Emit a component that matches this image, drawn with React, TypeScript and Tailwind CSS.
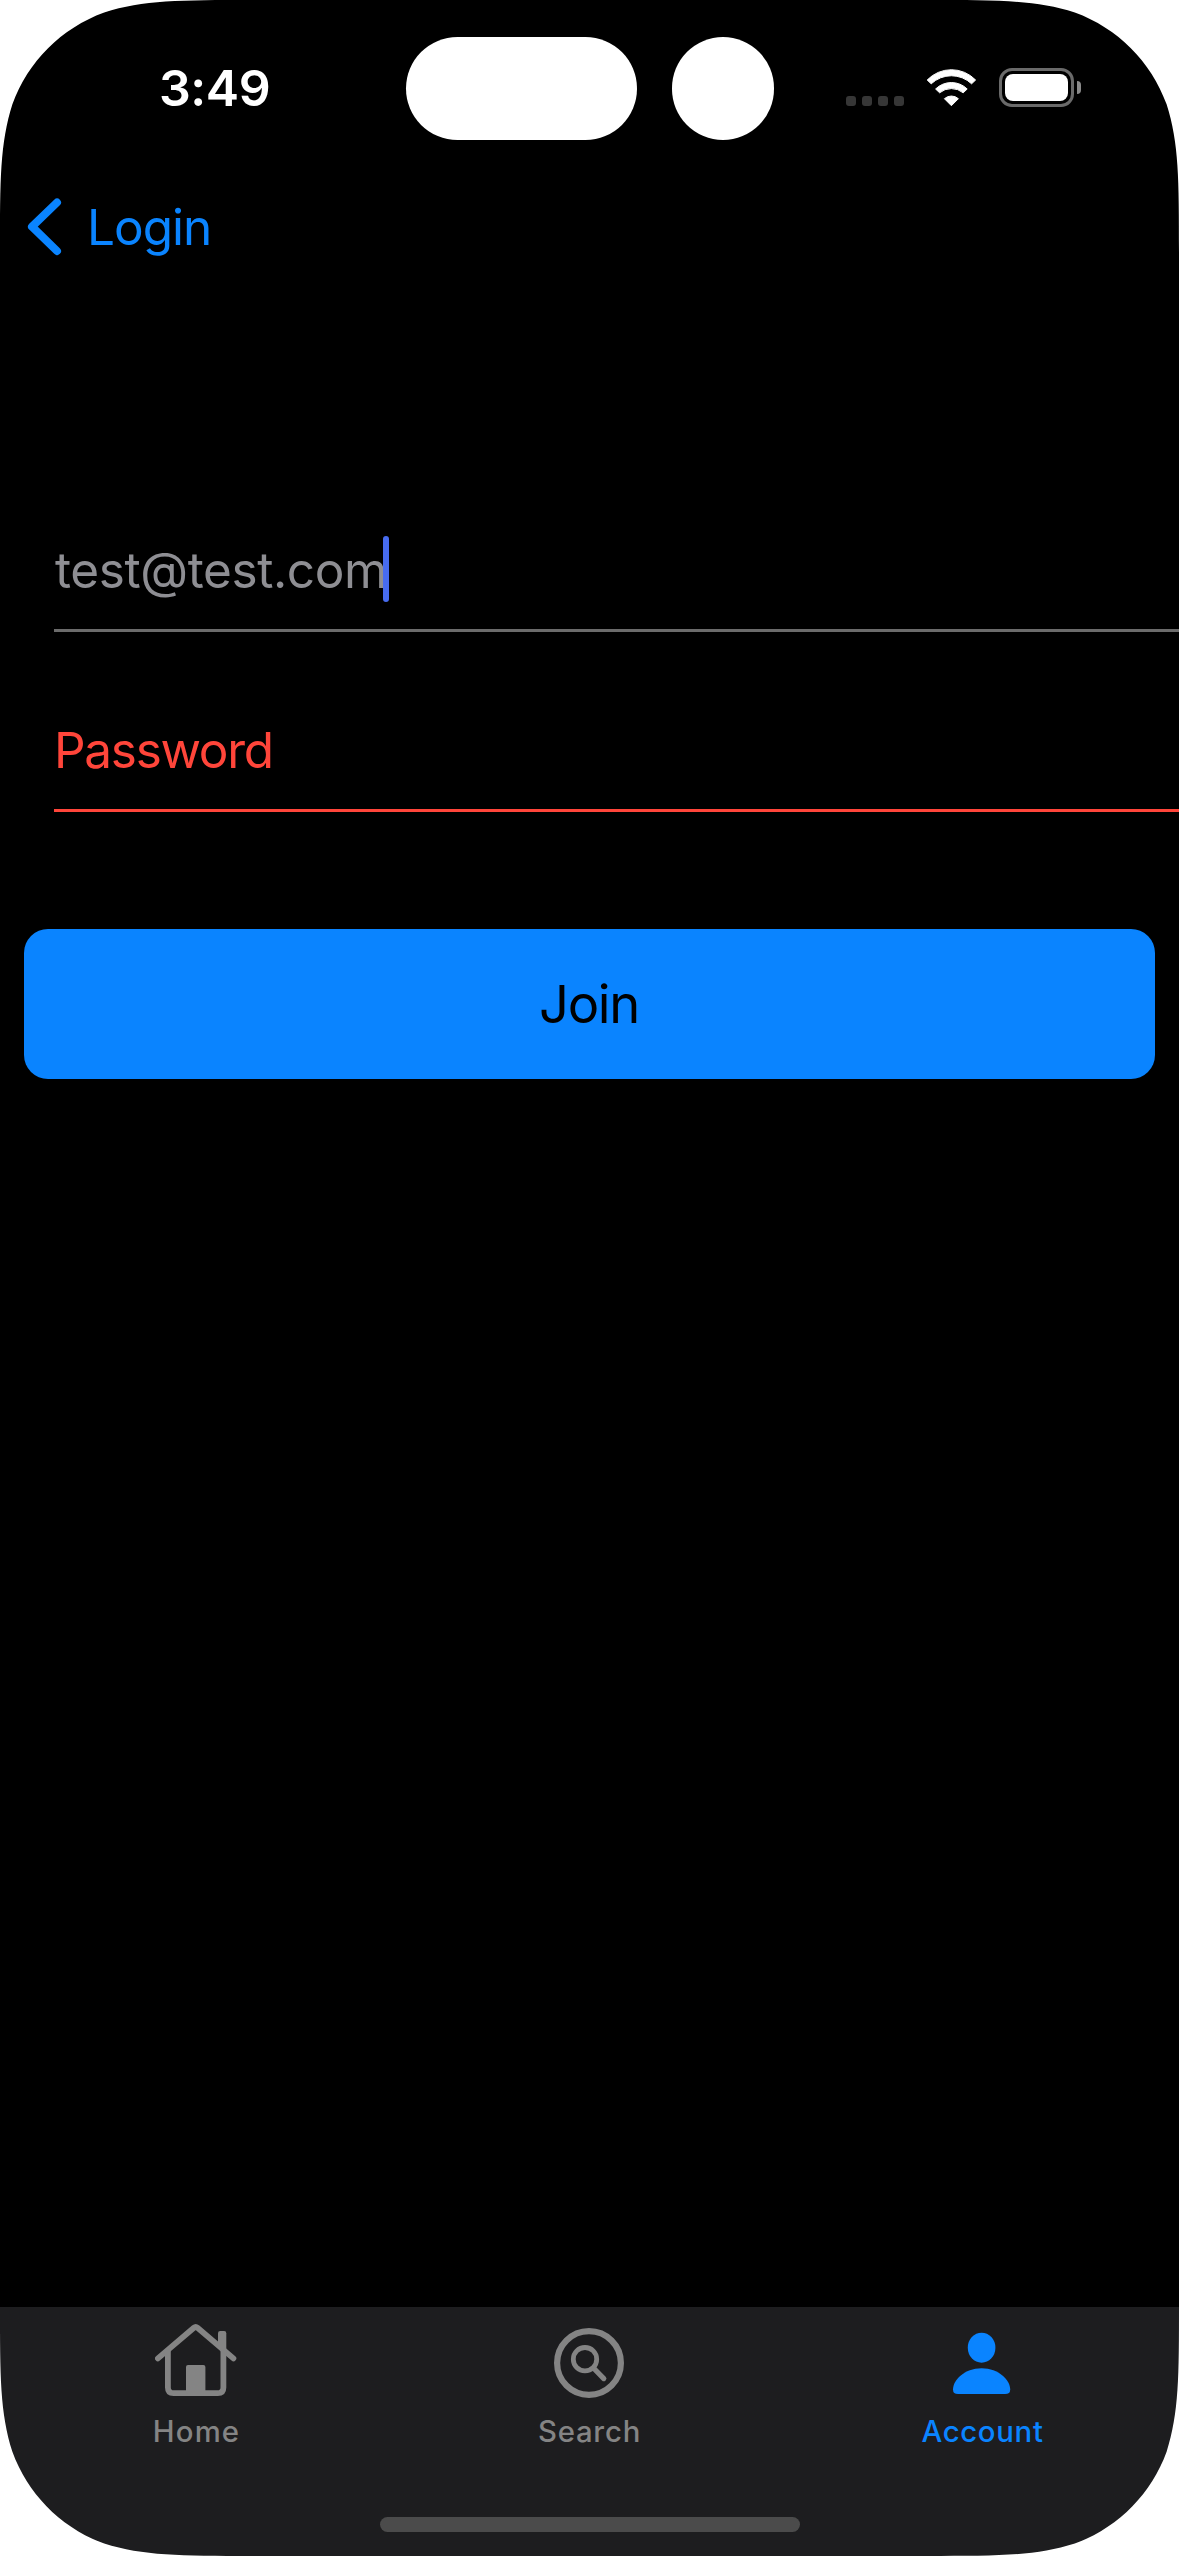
import type { ReactNode } from 'react';

function Corner({ className }: { className: string }) {
  return (
    <svg className={`pointer-events-none absolute h-[253px] w-[253px] ${className}`} viewBox="0 0 253 253" aria-hidden="true">
      <path
        d="M0 0H252.2C179.6 0 143.3 0 104.2 12.4C61.5 27.9 27.9 61.5 12.4 104.2C0 143.3 0 179.6 0 252.2Z"
        fill="#fff"
      />
    </svg>
  );
}

function WifiIcon() {
  return (
    <svg className="h-[38px] w-[51px]" viewBox="0 0 51 38" fill="#fff" stroke="#fff" strokeWidth="1" strokeLinejoin="round">
      <path d="M1.2 11A33.6 33.6 0 0 1 49.6 11L45.6 14.8A29.4 29.4 0 0 0 5.2 14.8Z" />
      <path d="M9.6 20A22.5 22.5 0 0 1 41.2 20L37.2 23.8A18.6 18.6 0 0 0 13.6 23.8Z" />
      <path d="M18.4 29.7A10.5 10.5 0 0 1 32.4 29.7L25.4 36.7Z" />
    </svg>
  );
}

function HomeIcon() {
  return (
    <svg className="h-[76px] w-[83px]" viewBox="0 0 83 76" fill="none" stroke="currentColor" strokeWidth="5.8" strokeLinecap="round" strokeLinejoin="round">
      <path d="M2.9 35.4L38.9 4.7Q40.7 3.2 42.5 4.7L78.4 35.4" />
      <path d="M12.9 27.5V64.4Q12.9 70.1 18.5 70.1H62.8Q68.4 70.1 68.4 64.4V27.5" strokeLinecap="butt" />
      <path d="M63 25V10.2Q63 8 65.2 8H69.2Q71.3 8 71.3 10.2V32Z" fill="currentColor" stroke="none" />
      <rect x="31" y="42" width="19.4" height="29" rx="2" fill="currentColor" stroke="none" />
    </svg>
  );
}

function SearchIcon() {
  return (
    <svg className="h-[76px] w-[83px]" viewBox="0 0 83 76" fill="none" stroke="currentColor" strokeLinecap="round">
      <circle cx="41" cy="40" r="31.9" strokeWidth="6.2" />
      <circle cx="37" cy="36.2" r="11.7" strokeWidth="4.8" />
      <path d="M45.7 45.2L55.8 55.6" strokeWidth="5.2" />
    </svg>
  );
}

function AccountIcon() {
  return (
    <svg className="h-[76px] w-[83px]" viewBox="0 0 83 76" fill="currentColor">
      <ellipse cx="40.6" cy="24.7" rx="13.8" ry="15" />
      <path d="M40.6 45.3C57.9 45.3 69.2 57.5 69.2 66.4Q69.2 71 64.2 71H17Q12 71 12 66.4C12 57.5 23.3 45.3 40.6 45.3Z" />
    </svg>
  );
}

function StatusBar() {
  return (
    <header className="flex h-[160px] items-start justify-between pt-[37px]">
      <div className="flex h-[102px] w-[405px] items-center pl-[159px]">
        <span className="text-[50px] leading-none font-semibold tracking-[-0.45px] text-white">3:49</span>
      </div>
      <div className="flex gap-[35px]">
        <div className="h-[103px] w-[231px] rounded-full bg-white" />
        <div className="h-[103px] w-[102px] rounded-full bg-white" />
      </div>
      <div className="flex h-[102px] w-[405px] items-center pl-[72px]">
        <div className="flex gap-1.5 pt-[26px]">
          {[0, 1, 2, 3].map((dot) => (
            <div key={dot} className="h-2.5 w-2.5 rounded-[3px] bg-[#363636]" />
          ))}
        </div>
        <div className="ml-[22px]">
          <WifiIcon />
        </div>
        <div className="-mt-px ml-[22px] flex items-center">
          <div className="h-[39px] w-[75px] rounded-[13px] border-[3px] border-[#6a6a6a] p-[3px]">
            <div className="h-full w-full rounded-[8px] bg-white" />
          </div>
          <div className="ml-[3px] h-[13px] w-1 rounded-r-full bg-[#8a8a8a]" />
        </div>
      </div>
    </header>
  );
}

function Tab({ icon, label, className }: { icon: ReactNode; label: string; className: string }) {
  return (
    <button className={`flex flex-1 flex-col items-center pt-4 text-[29.3px] font-[450] ${className}`}>
      {icon}
      <span className="flex h-[66px] items-center">{label}</span>
    </button>
  );
}

export default function App() {
  return (
    <div className="relative flex h-[2556px] w-[1179px] flex-col overflow-hidden bg-black font-['Inter',sans-serif]">
      <StatusBar />

      <nav className="flex h-[134px] items-center pl-[27px] text-[#0a84ff]">
        <svg className="h-[58px] w-[35px]" viewBox="0 0 35 58" fill="none" stroke="currentColor" strokeWidth="8" strokeLinecap="round" strokeLinejoin="round">
          <path d="M30 4.5L5 28.7L30 53" />
        </svg>
        <span className="mt-0.5 ml-[25px] text-[49.5px] leading-none tracking-[-1px]">Login</span>
      </nav>

      <main className="flex flex-1 flex-col pt-[158px]">
        <div className="ml-[54px] flex h-[180px] items-center border-b-[3px] border-[#6b6b6b] pt-[59px] text-[#8e8e93]">
          <span className="mt-0.5 ml-px text-[49.5px] leading-none tracking-[-0.4px]">test@test.com</span>
          <div className="relative -mt-0.5 -ml-[4px] h-[66px] w-1.5 rounded-full bg-[#476cf0]" />
        </div>
        <div className="ml-[54px] flex h-[180px] items-center border-b-[3px] border-[#ff453a] pt-[59px] text-[#ff453a]">
          <span className="mt-0.5 text-[49.5px] leading-none tracking-[-1.3px]">Password</span>
        </div>
        <button className="mx-6 mt-[117px] flex h-[150px] items-center justify-center rounded-[24px] bg-[#0a84ff] pr-px text-[52.5px] leading-none tracking-[-1.3px] text-black">
          Join
        </button>
      </main>

      <footer className="flex h-[249px] flex-col items-center justify-between bg-[#1d1d1f] pb-6">
        <div className="flex w-full">
          <Tab icon={<HomeIcon />} label="Home" className="tracking-[1.2px] text-[#848484]" />
          <Tab icon={<SearchIcon />} label="Search" className="tracking-[0.8px] text-[#848484]" />
          <Tab icon={<AccountIcon />} label="Account" className="tracking-[0.7px] text-[#0a84ff]" />
        </div>
        <div className="h-[15px] w-[420px] rounded-full bg-[#4b4b4b]" />
      </footer>

      <Corner className="top-0 left-0" />
      <Corner className="top-0 right-0 rotate-90" />
      <Corner className="right-0 bottom-0 rotate-180" />
      <Corner className="bottom-0 left-0 -rotate-90" />
    </div>
  );
}
